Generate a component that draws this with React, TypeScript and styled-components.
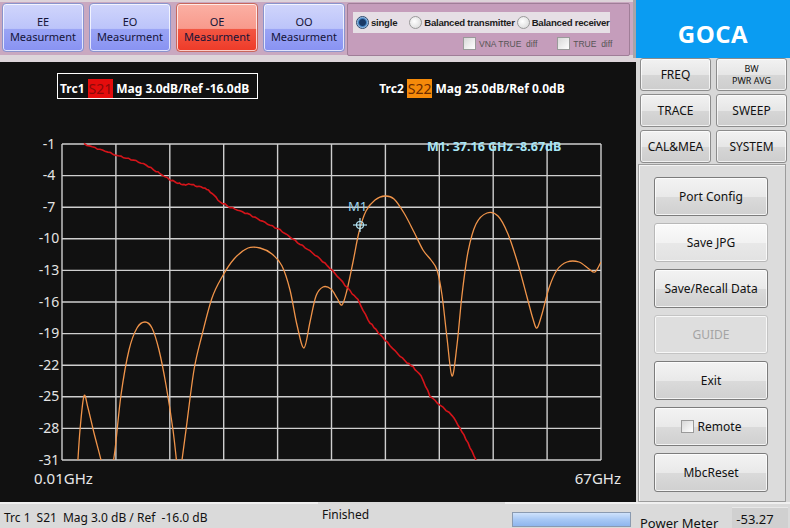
import React from 'react';
import styled, { createGlobalStyle } from 'styled-components';

const GlobalStyle = createGlobalStyle`
  * { box-sizing: border-box; }
  html, body { margin: 0; padding: 0; background: #d8d8d8; }
  body { font-family: "Noto Sans", "Open Sans", sans-serif; }
`;

const Screen = styled.div`
  width: 790px;
  height: 528px;
  display: flex;
  flex-direction: column;
  overflow: hidden;
  background: #dadada;
`;

/* ---------- top bar ---------- */

const TopBar = styled.div`
  display: flex;
  height: 58px;
`;

const ModeArea = styled.div`
  width: 636px;
  display: flex;
  align-items: flex-start;
  gap: 5px;
  padding: 3px 0 0 2px;
  background: linear-gradient(#ddd3d9 0 2px, #c9a8c0 2px 55px, #ddd5da 55px);
  border-right: 3px solid #a8a4a8;
`;

const ModeButton = styled.div<{ $active?: boolean }>`
  width: 82px;
  height: 49px;
  border-radius: 4px;
  border: 1px solid ${p => (p.$active ? '#c8685c' : '#8a94cc')};
  box-shadow: inset 0 0 0 1px rgba(255, 255, 255, 0.75);
  background: ${p =>
    p.$active
      ? 'linear-gradient(#fbb0a4, #f89a8c 52%, #f25642 54%, #ee3a28)'
      : 'linear-gradient(#d0d5fb, #bcc4fa 52%, #9aa4f5 54%, #8892f2)'};
  display: flex;
  flex-direction: column;
  align-items: center;
  justify-content: center;
  padding-top: 2px;
  font-size: 11px;
  line-height: 15px;
  color: #141438;
`;

const ModeLine = styled.span`
  display: block;
  height: 15px;
`;

const OptionPanel = styled.div`
  margin-left: -3px;
  width: 283px;
  height: 53px;
  background: #c59dbb;
  border: 1px solid #a07e98;
  border-radius: 2px;
  padding: 8px 0 0 5px;
  display: flex;
  flex-direction: column;
  gap: 4px;
`;

const RadioStrip = styled.div`
  display: flex;
  align-items: center;
  width: 257px;
  height: 21px;
  background: #e6dfe5;
  padding-left: 3px;
  font-family: "Liberation Sans", Arial, sans-serif;
  font-size: 9.6px;
  font-weight: bold;
  color: #1c1c1c;
`;

const RadioItem = styled.span<{ $gap?: number }>`
  display: flex;
  align-items: center;
  gap: 2px;
  margin-right: ${p => p.$gap ?? 0}px;
  letter-spacing: -0.25px;
  white-space: nowrap;
`;

const RadioDot = styled.span<{ $on?: boolean }>`
  width: 13px;
  height: 13px;
  border-radius: 50%;
  border: 1px solid ${p => (p.$on ? '#2a4a70' : '#9a9a9a')};
  background: ${p =>
    p.$on
      ? 'radial-gradient(circle at 50% 50%, #1a3a66 0 3px, #3f7fbf 4px, #d8e8f8 6px)'
      : 'radial-gradient(circle at 40% 40%, #ffffff, #d4d4d4)'};
  flex: none;
`;

const CheckRow = styled.div`
  display: flex;
  align-items: center;
  padding-left: 110px;
  font-family: "Liberation Sans", Arial, sans-serif;
  font-size: 8.5px;
  color: #555;
`;

const CheckItem = styled.span<{ $gap?: number }>`
  display: flex;
  align-items: center;
  gap: 3px;
  margin-right: ${p => p.$gap ?? 0}px;
`;

const CheckBox = styled.span`
  width: 13px;
  height: 13px;
  border: 1px solid #9a9a9a;
  background: linear-gradient(135deg, #d8d8d8, #ffffff);
  display: inline-block;
  flex: none;
`;

const Brand = styled.div`
  flex: 1;
  background: #0a9cf2;
  color: #fff;
  display: flex;
  align-items: center;
  justify-content: center;
  padding-top: 8px;
  font-family: "Open Sans", "Noto Sans", sans-serif;
  font-size: 24px;
  font-weight: bold;
  letter-spacing: 0.5px;
`;

/* ---------- middle ---------- */

const Middle = styled.div`
  display: flex;
  height: 444px;
`;

const ChartPanel = styled.div`
  width: 636px;
  background: #111111;
  border-top: 4px solid #ddd5da;
  display: flex;
  flex-direction: column;
`;

const TraceHeader = styled.div`
  height: 42px;
  display: flex;
  align-items: flex-start;
  padding: 11px 0 0 57px;
  font-size: 12px;
  font-weight: bold;
  color: #ffffff;
`;

const TraceLabel = styled.div<{ $boxed?: boolean; $ml?: number }>`
  display: flex;
  align-items: flex-end;
  height: 26px;
  padding: 0 8px 0 2px;
  margin-left: ${p => p.$ml ?? 0}px;
  border: 1px solid ${p => (p.$boxed ? '#ffffff' : 'transparent')};
  white-space: nowrap;
  gap: 3px;
`;

const ParamTag = styled.span<{ $color: string; $ink: string }>`
  background: ${p => p.$color};
  color: ${p => p.$ink};
  font-weight: normal;
  font-size: 14px;
  line-height: 19px;
  padding: 0 1px;
`;

const TagText = styled.span`
  line-height: 19px;
`;

const Plot = styled.svg`
  display: block;
  flex: 1;
  font-family: "Noto Sans", "Open Sans", sans-serif;
`;

/* ---------- side panel ---------- */

const SidePanel = styled.div`
  width: 154px;
  background: #d8d8d8;
  padding: 0 3px 0 4px;
  display: flex;
  flex-direction: column;
`;

const MenuGrid = styled.div`
  display: grid;
  grid-template-columns: 71px 71px;
  grid-auto-rows: 33px;
  column-gap: 5px;
  row-gap: 3px;
`;

const MenuButton = styled.div<{ $small?: boolean }>`
  border: 1px solid #8c8c8c;
  border-radius: 3px;
  box-shadow: inset 0 0 0 1px rgba(255, 255, 255, 0.7);
  background: linear-gradient(#f2f2f2, #e6e6e6 50%, #d6d6d6 52%, #cdcdcd);
  display: flex;
  flex-direction: column;
  align-items: center;
  justify-content: center;
  font-size: ${p => (p.$small ? '9px' : '12px')};
  line-height: ${p => (p.$small ? '12px' : '15px')};
  color: #111;
`;

const ActionBox = styled.div`
  flex: 1;
  margin: 1px 0 0 -2px;
  width: 148px;
  border: 1px solid #9c9c9c;
  box-shadow: inset 1px 1px 0 #f4f4f4;
  background: #dcdcdc;
  padding: 12px 0 0 15px;
  display: flex;
  flex-direction: column;
  gap: 7px;
`;

const ActionButton = styled.div<{ $hover?: boolean; $disabled?: boolean }>`
  width: 114px;
  height: 39px;
  border: 1px solid ${p => (p.$disabled ? '#c4c4c4' : p.$hover ? '#b8b8b8' : '#7c7c7c')};
  border-radius: 3px;
  box-shadow: inset 0 0 0 1px rgba(255, 255, 255, 0.75);
  background: ${p =>
    p.$hover
      ? 'linear-gradient(#fafafa, #f2f2f2 50%, #e8e8e8 52%, #e2e2e2)'
      : p.$disabled
      ? '#dedede'
      : 'linear-gradient(#f3f3f3, #e9e9e9 50%, #dadada 52%, #d0d0d0)'};
  display: flex;
  align-items: center;
  justify-content: center;
  gap: 4px;
  font-size: 12px;
  color: ${p => (p.$disabled ? '#a4a4a4' : '#111')};
`;

/* ---------- status bar ---------- */

const StatusBar = styled.div`
  height: 26px;
  display: flex;
  background: #dadada;
  font-size: 12px;
  color: #111;
`;

const StatusCell = styled.div<{ $w: number; $raised?: boolean }>`
  width: ${p => p.$w}px;
  display: flex;
  align-items: center;
  gap: 6px;
  padding: ${p => (p.$raised ? '0 0 3px 4px' : '2px 0 0 4px')};
  border-top: 2px solid ${p => (p.$raised ? '#dadada' : '#f0f0f0')};
  white-space: nowrap;
`;

const Progress = styled.div`
  width: 119px;
  height: 15px;
  margin: 5px 0 0 3px;
  border: 1px solid #8a9ab0;
  background: linear-gradient(#cfe2fb, #a8c8f4 50%, #8fb6ee);
`;

const MeterLabel = styled.span`
  align-self: flex-end;
  margin-bottom: -3px;
  font-size: 13px;
  line-height: 16px;
`;

const MeterValue = styled.div`
  width: 56px;
  height: 23px;
  margin: 3px 0 0 8px;
  background: #d0d0d0;
  border-top: 1px solid #e8e8e8;
  padding: 2px 0 0 4px;
  font-size: 13px;
`;

/* ---------- chart data ---------- */

const X0 = 62;
const X1 = 601;
const Y0 = 144;
const Y1 = 460;
const yTicks = [-1, -4, -7, -10, -13, -16, -19, -22, -25, -28, -31];

type Pt = [number, number];

function smooth(pts: Pt[]): string {
  let d = `M${pts[0][0]},${pts[0][1]}`;
  for (let i = 0; i < pts.length - 1; i++) {
    const p0 = pts[i - 1] || pts[i];
    const p1 = pts[i];
    const p2 = pts[i + 1];
    const p3 = pts[i + 2] || p2;
    const c1 = [p1[0] + (p2[0] - p0[0]) / 6, p1[1] + (p2[1] - p0[1]) / 6];
    const c2 = [p2[0] - (p3[0] - p1[0]) / 6, p2[1] - (p3[1] - p1[1]) / 6];
    d += ` C${c1[0]},${c1[1]} ${c2[0]},${c2[1]} ${p2[0]},${p2[1]}`;
  }
  return d;
}

const s22Parts: Pt[][] = [
  [[77, 475], [80, 430], [84, 396], [88, 408], [94, 433], [101, 460], [104, 475]],
  [[111, 475], [115, 450], [121, 395], [129, 350], [137, 328], [145, 322], [152, 328], [159, 350], [166, 385], [173, 430], [178, 475]],
  [
    [180, 475], [186, 430], [194, 370], [202, 335], [212, 298], [222, 277], [234, 259], [248, 248], [260, 248],
    [272, 254], [282, 266], [290, 290], [297, 325], [304, 348], [310, 322], [316, 296], [323, 287], [331, 289],
    [337, 298], [342, 305], [347, 290], [353, 262], [359, 232], [366, 211], [375, 200], [385, 196], [394, 199],
    [404, 213], [414, 232], [423, 250], [431, 260], [437, 270], [442, 295], [447, 338], [452, 376], [457, 345],
    [462, 295], [468, 252], [476, 224], [487, 213], [498, 216], [508, 234], [518, 264], [527, 297], [533, 319],
    [537, 328], [542, 314], [549, 288], [557, 270], [567, 262], [579, 262], [589, 269], [595, 272], [601, 262],
  ],
];

const s21Base: Pt[] = [
  [84, 144], [95, 148], [105, 151], [116, 155], [126, 158], [136, 161], [146, 165], [156, 171], [164, 176],
  [171, 180], [178, 183], [184, 185], [190, 184], [197, 186], [205, 188], [212, 193], [220, 202], [230, 207],
  [240, 211], [250, 215], [260, 220], [270, 225], [280, 230], [290, 237], [300, 244], [310, 251], [320, 259],
  [330, 268], [340, 279], [350, 291], [358, 300], [368, 320], [376, 330], [385, 340], [395, 351], [405, 361],
  [413, 367], [421, 376], [430, 396], [440, 405], [452, 415], [460, 428], [468, 443], [476, 460],
];

function jitter(pts: Pt[]): string {
  const out: string[] = [];
  for (let i = 0; i < pts.length - 1; i++) {
    const [ax, ay] = pts[i];
    const [bx, by] = pts[i + 1];
    for (let k = 0; k < 4; k++) {
      const t = k / 4;
      const n = Math.sin((ax + k * 2.3) * 1.7) * 0.6;
      out.push(`${(ax + (bx - ax) * t).toFixed(1)},${(ay + (by - ay) * t + n).toFixed(1)}`);
    }
  }
  const last = pts[pts.length - 1];
  out.push(`${last[0]},${last[1]}`);
  return out.join(' ');
}

function Chart() {
  const xs = Array.from({ length: 11 }, (_, i) => X0 + ((X1 - X0) * i) / 10);
  const ys = yTicks.map((_, i) => Y0 + ((Y1 - Y0) * i) / 10);
  return (
    <Plot viewBox="0 104 636 398" width={636} height={398}>
      <defs>
        <clipPath id="plotClip">
          <rect x={X0} y={Y0 - 10} width={X1 - X0} height={Y1 - Y0 + 10} />
        </clipPath>
      </defs>
      {xs.map(x => (
        <line key={`v${x}`} x1={x} y1={Y0} x2={x} y2={Y1} stroke="#cfcfcf" strokeWidth={1.4} />
      ))}
      {ys.map(y => (
        <line key={`h${y}`} x1={X0} y1={y} x2={X1} y2={y} stroke="#cfcfcf" strokeWidth={1.4} />
      ))}
      {yTicks.map((t, i) => (
        <text key={t} x={49} y={ys[i] + 4.5} fill="#e4e4e4" fontSize={14} textAnchor="middle">
          {t}
        </text>
      ))}
      <text x={34} y={484} fill="#e8e8e8" fontSize={15}>0.01GHz</text>
      <text x={621} y={484} fill="#e8e8e8" fontSize={15} textAnchor="end">67GHz</text>
      <g clipPath="url(#plotClip)" fill="none">
        {s22Parts.map((p, i) => (
          <path key={i} d={smooth(p)} stroke="#f0944a" strokeWidth={1.3} />
        ))}
        <polyline points={jitter(s21Base)} stroke="#d4141a" strokeWidth={1.6} />
      </g>
      <text x={427} y={151} fill="#a8e6f6" fontSize={12.5} fontWeight="bold">M1: 37.16 GHz -8.67dB</text>
      <text x={348} y={211} fill="#9fd4ec" fontSize={13}>M1</text>
      <g stroke="#b4e4f4" strokeWidth={1.2} fill="none">
        <circle cx={360} cy={225} r={3.5} />
        <line x1={353} y1={225} x2={367} y2={225} />
        <line x1={360} y1={218} x2={360} y2={232} />
      </g>
    </Plot>
  );
}

export default function App() {
  return (
    <>
      <GlobalStyle />
      <Screen>
        <TopBar>
          <ModeArea>
            <ModeButton><ModeLine>EE</ModeLine><ModeLine>Measurment</ModeLine></ModeButton>
            <ModeButton><ModeLine>EO</ModeLine><ModeLine>Measurment</ModeLine></ModeButton>
            <ModeButton $active><ModeLine>OE</ModeLine><ModeLine>Measurment</ModeLine></ModeButton>
            <ModeButton><ModeLine>OO</ModeLine><ModeLine>Measurment</ModeLine></ModeButton>
            <OptionPanel>
              <RadioStrip>
                <RadioItem $gap={12}><RadioDot $on />single</RadioItem>
                <RadioItem $gap={2}><RadioDot />Balanced transmitter</RadioItem>
                <RadioItem><RadioDot />Balanced receiver</RadioItem>
              </RadioStrip>
              <CheckRow>
                <CheckItem $gap={20}><CheckBox />VNA TRUE&nbsp; diff</CheckItem>
                <CheckItem><CheckBox />TRUE&nbsp; diff</CheckItem>
              </CheckRow>
            </OptionPanel>
          </ModeArea>
          <Brand>GOCA</Brand>
        </TopBar>
        <Middle>
          <ChartPanel>
            <TraceHeader>
              <TraceLabel $boxed>
                <TagText>Trc1</TagText>
                <ParamTag $color="#e40c0c" $ink="#8a0a0a">S21</ParamTag>
                <TagText>Mag 3.0dB/Ref -16.0dB</TagText>
              </TraceLabel>
              <TraceLabel $ml={118}>
                <TagText>Trc2</TagText>
                <ParamTag $color="#f58a0a" $ink="#6a2a00">S22</ParamTag>
                <TagText>Mag 25.0dB/Ref 0.0dB</TagText>
              </TraceLabel>
            </TraceHeader>
            <Chart />
          </ChartPanel>
          <SidePanel>
            <MenuGrid>
              <MenuButton>FREQ</MenuButton>
              <MenuButton $small><span>BW</span><span>PWR AVG</span></MenuButton>
              <MenuButton>TRACE</MenuButton>
              <MenuButton>SWEEP</MenuButton>
              <MenuButton>CAL&amp;MEA</MenuButton>
              <MenuButton>SYSTEM</MenuButton>
            </MenuGrid>
            <ActionBox>
              <ActionButton>Port Config</ActionButton>
              <ActionButton $hover>Save JPG</ActionButton>
              <ActionButton>Save/Recall Data</ActionButton>
              <ActionButton $disabled>GUIDE</ActionButton>
              <ActionButton>Exit</ActionButton>
              <ActionButton><CheckBox />Remote</ActionButton>
              <ActionButton>MbcReset</ActionButton>
            </ActionBox>
          </SidePanel>
        </Middle>
        <StatusBar>
          <StatusCell $w={318}>
            <span>Trc 1</span><span>S21</span><span>Mag 3.0 dB / Ref&nbsp; -16.0 dB</span>
          </StatusCell>
          <StatusCell $w={187} $raised>Finished</StatusCell>
          <StatusCell $w={131}><Progress /></StatusCell>
          <StatusCell $w={154}>
            <MeterLabel>Power Meter</MeterLabel>
            <MeterValue>-53.27</MeterValue>
          </StatusCell>
        </StatusBar>
      </Screen>
    </>
  );
}
